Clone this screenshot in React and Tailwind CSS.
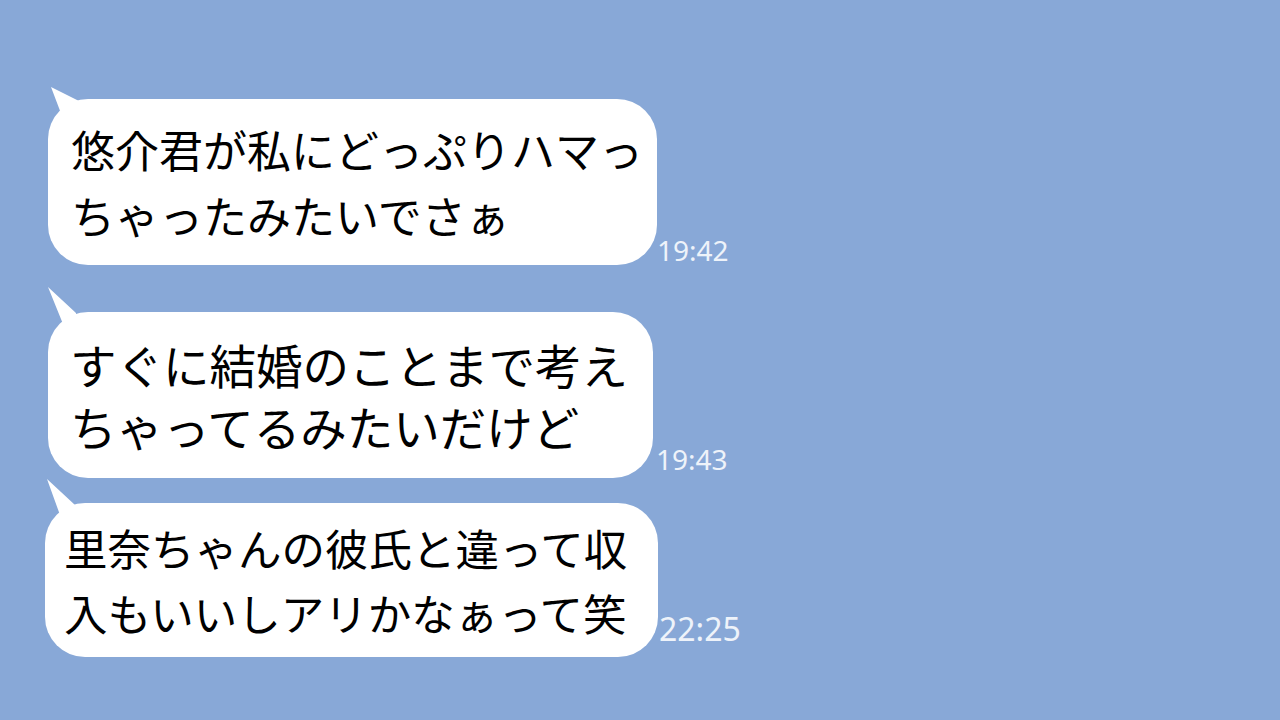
import React from "react";

const jp = { fontFamily: '"Noto Sans CJK JP", "Noto Sans", sans-serif' };
const num = { fontFamily: '"Noto Sans", "Open Sans", sans-serif' };

function Tail({ tip, right, left }) {
  const d = `M${tip[0]} ${tip[1]} L${right[0]} ${right[1]} L${right[0]} 30 L${left[0]} 30 L${left[0]} ${left[1]} Z`;
  return (
    <svg
      className="absolute left-0 top-0 overflow-visible"
      width="1"
      height="1"
      viewBox="0 0 1 1"
    >
      <path d={d} fill="#ffffff" />
    </svg>
  );
}

export default function App() {
  return (
    <div className="w-[1280px] h-[720px] bg-[#88a8d7] overflow-hidden flex flex-col">
      {/* Bubble 1 */}
      <div className="flex items-end mt-[99px] ml-[48px]">
        <div className="relative w-[609px] h-[166px] bg-white rounded-[40px]">
          <Tail tip={[3, -12]} right={[31, 2]} left={[14, 17]} />
          <div
            className="relative pl-[23px] pt-[17px] text-[44px] leading-[66px] text-black whitespace-nowrap"
            style={jp}
          >
            <div>悠介君が私にどっぷりハマっ</div>
            <div>ちゃったみたいでさぁ</div>
          </div>
        </div>
        <div
          className="ml-[0px] mb-[-2px] text-[28px] leading-[34px] text-[#eef3fa]"
          style={num}
        >
          19:42
        </div>
      </div>

      {/* Bubble 2 */}
      <div className="flex items-end mt-[47px] ml-[48px]">
        <div className="relative w-[605px] h-[166px] bg-white rounded-[40px]">
          <Tail tip={[0, -25]} right={[28, 1]} left={[15, 12]} />
          <div
            className="relative pl-[22px] pt-[21px] text-[46.5px] leading-[62px] text-black whitespace-nowrap"
            style={jp}
          >
            <div>すぐに結婚のことまで考え</div>
            <div>ちゃってるみたいだけど</div>
          </div>
        </div>
        <div
          className="ml-[3px] mb-[2px] text-[28px] leading-[34px] text-[#eef3fa]"
          style={num}
        >
          19:43
        </div>
      </div>

      {/* Bubble 3 */}
      <div className="flex items-end mt-[25px] ml-[45px]">
        <div className="relative w-[613px] h-[154px] bg-white rounded-[40px]">
          <Tail tip={[2, -24]} right={[30, 2]} left={[15, 12]} />
          <div
            className="relative pl-[19px] pt-[12px] text-[43.5px] leading-[65px] text-black whitespace-nowrap"
            style={jp}
          >
            <div>里奈ちゃんの彼氏と違って収</div>
            <div>入もいいしアリかなぁって笑</div>
          </div>
        </div>
        <div
          className="ml-[1px] mb-[9px] text-[32px] leading-[38px] text-[#eef3fa]"
          style={num}
        >
          22:25
        </div>
      </div>
    </div>
  );
}
